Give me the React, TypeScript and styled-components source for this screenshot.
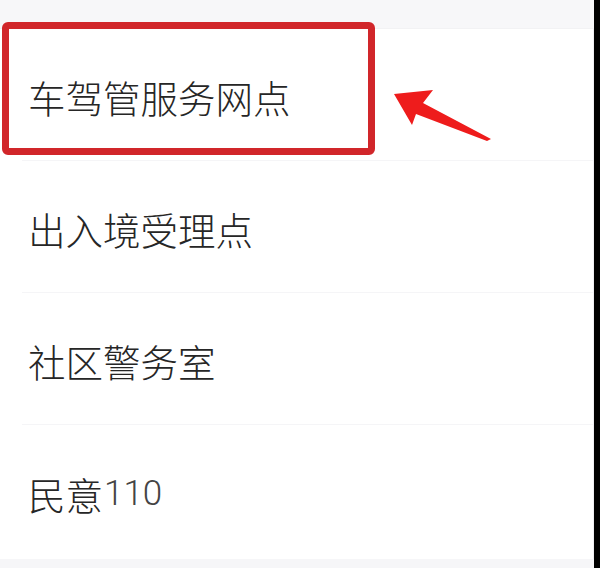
import React from 'react'
import styled, { createGlobalStyle } from 'styled-components'

const GlobalStyle = createGlobalStyle`
  html, body {
    margin: 0;
    padding: 0;
    background: #000;
  }
  #root {
    width: 600px;
    height: 568px;
  }
`

const Page = styled.div`
  display: flex;
  width: 600px;
  height: 568px;
  overflow: hidden;
`

const Screen = styled.div`
  position: relative;
  flex: 0 0 594px;
  display: flex;
  flex-direction: column;
  background: #f6f6f8;
`

const EdgeShade = styled.div`
  flex: 1;
  background: #000;
`

const TopBand = styled.div`
  height: 28px;
  background: #f7f7f9;
  border-bottom: 1px solid #f2f2f4;
`

const List = styled.ul`
  list-style: none;
  margin: 0;
  padding: 0;
  background: #fff;
  border-right: 1px solid #efeff2;
`

const Row = styled.li<{ $last?: boolean }>`
  height: ${p => (p.$last ? 134 : 132)}px;
  margin-left: 22px;
  padding: 3px 0 0 6px;
  box-sizing: border-box;
  display: flex;
  align-items: center;
  border-bottom: ${p => (p.$last ? 'none' : '1px solid #f5f5f7')};
  font-family: 'Noto Sans CJK SC', 'Noto Sans', sans-serif;
  font-size: 37.5px;
  font-weight: 300;
  color: #262626;
`

const Num = styled.span`
  font-family: Roboto, 'Liberation Sans', sans-serif;
  font-size: 35px;
  font-weight: 300;
  color: #444;
  margin-left: 1px;
`

const Highlight = styled.div`
  position: absolute;
  left: 2px;
  top: 22px;
  width: 373px;
  height: 133px;
  box-sizing: border-box;
  border: 7px solid #d1262a;
  border-radius: 6px;
  pointer-events: none;
`

const Pointer = styled.svg`
  position: absolute;
  left: 0;
  top: 0;
  pointer-events: none;
`

const items = ['车驾管服务网点', '出入境受理点', '社区警务室']

export default function App() {
  return (
    <Page>
      <GlobalStyle />
      <Screen>
        <TopBand />
        <List>
          {items.map(t => (
            <Row key={t}>{t}</Row>
          ))}
          <Row $last>
            民意<Num>110</Num>
          </Row>
        </List>
        <Highlight />
        <Pointer width="594" height="568" viewBox="0 0 594 568">
          <polygon
            points="394,94 433,90 423,103 491,139 487,141 416,114 412,125"
            fill="#ee1c1c"
          />
        </Pointer>
      </Screen>
      <EdgeShade />
    </Page>
  )
}
